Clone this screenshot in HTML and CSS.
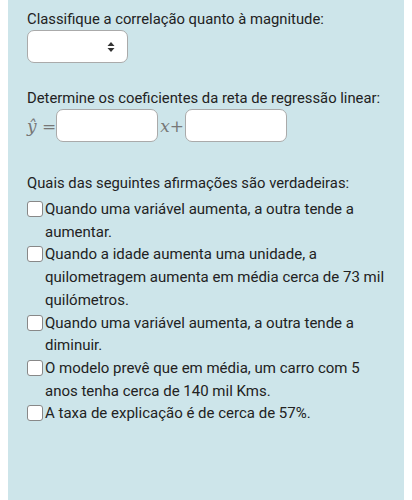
FILE: index.html
```html
<!DOCTYPE html>
<html lang="pt">
<head>
  <meta charset="UTF-8" />
  <meta name="viewport" content="width=device-width, initial-scale=1.0"/>
  <title>Questionário</title>
  <link rel="stylesheet" href="styles.css">
</head>
<body>
  <div class="panel">
    <div class="question">
      <p class="prompt">Classifique a correlação quanto à magnitude:</p>
      <div class="select-box">
        <svg class="select-arrow" width="8" height="12" viewBox="0 0 8 12">
          <path d="M4 1 L7.5 5 L0.5 5 Z M4 11 L7.5 7 L0.5 7 Z" fill="#333"/>
        </svg>
      </div>
    </div>

    <div class="question">
      <p class="prompt">Determine os coeficientes da reta de regressão linear:</p>
      <div class="equation">
        <span class="math">ŷ =</span>
        <div class="num-input"></div>
        <span class="math times">x+</span>
        <div class="num-input"></div>
      </div>
    </div>

    <div class="question">
      <p class="prompt">Quais das seguintes afirmações são verdadeiras:</p>
      <ul class="options">
        <li><span class="check"></span><span>Quando uma variável aumenta, a outra tende a aumentar.</span></li>
        <li><span class="check"></span><span>Quando a idade aumenta uma unidade, a quilometragem aumenta em média cerca de 73 mil quilómetros.</span></li>
        <li><span class="check"></span><span>Quando uma variável aumenta, a outra tende a diminuir.</span></li>
        <li><span class="check"></span><span>O modelo prevê que em média, um carro com 5 anos tenha cerca de 140 mil Kms.</span></li>
        <li><span class="check"></span><span>A taxa de explicação é de cerca de 57%.</span></li>
      </ul>
    </div>
  </div>
</body>
</html>
```

FILE: styles.css
```css
* {
  margin: 0;
  padding: 0;
  box-sizing: border-box;
}
body {
  font-family: Roboto, 'Noto Sans', sans-serif;
  font-size: 14.8px;
  color: #222;
  background: #fff;
}
.panel {
  margin: 0 8px;
  min-height: 100vh;
  background: #cde5ea;
  padding: 8px 19px 20px;
}
.question {
  margin-bottom: 24px;
}
.prompt {
  line-height: 22px;
}
.select-box {
  position: relative;
  width: 101px;
  height: 33px;
  background: #fff;
  border: 1px solid #aaa;
  border-radius: 7px;
}
.select-arrow {
  position: absolute;
  right: 12px;
  top: 10px;
}
.equation {
  display: flex;
  align-items: center;
  padding-bottom: 6px;
}
.math {
  font-family: 'DejaVu Serif', serif;
  font-style: italic;
  font-size: 17px;
  color: #777;
}
.times {
  margin: 0 1px 0 2px;
}
.num-input {
  width: 102px;
  height: 33px;
  background: #fff;
  border: 1px solid #aaa;
  border-radius: 7px;
}
.options {
  list-style: none;
  margin-top: 4px;
  font-size: 15px;
}
.options li {
  display: flex;
  line-height: 22.7px;
}
.check {
  flex: none;
  width: 16px;
  height: 16px;
  margin: 3px 2px 0 0;
  background: #fff;
  border: 1px solid #888;
  border-radius: 3px;
}
```
